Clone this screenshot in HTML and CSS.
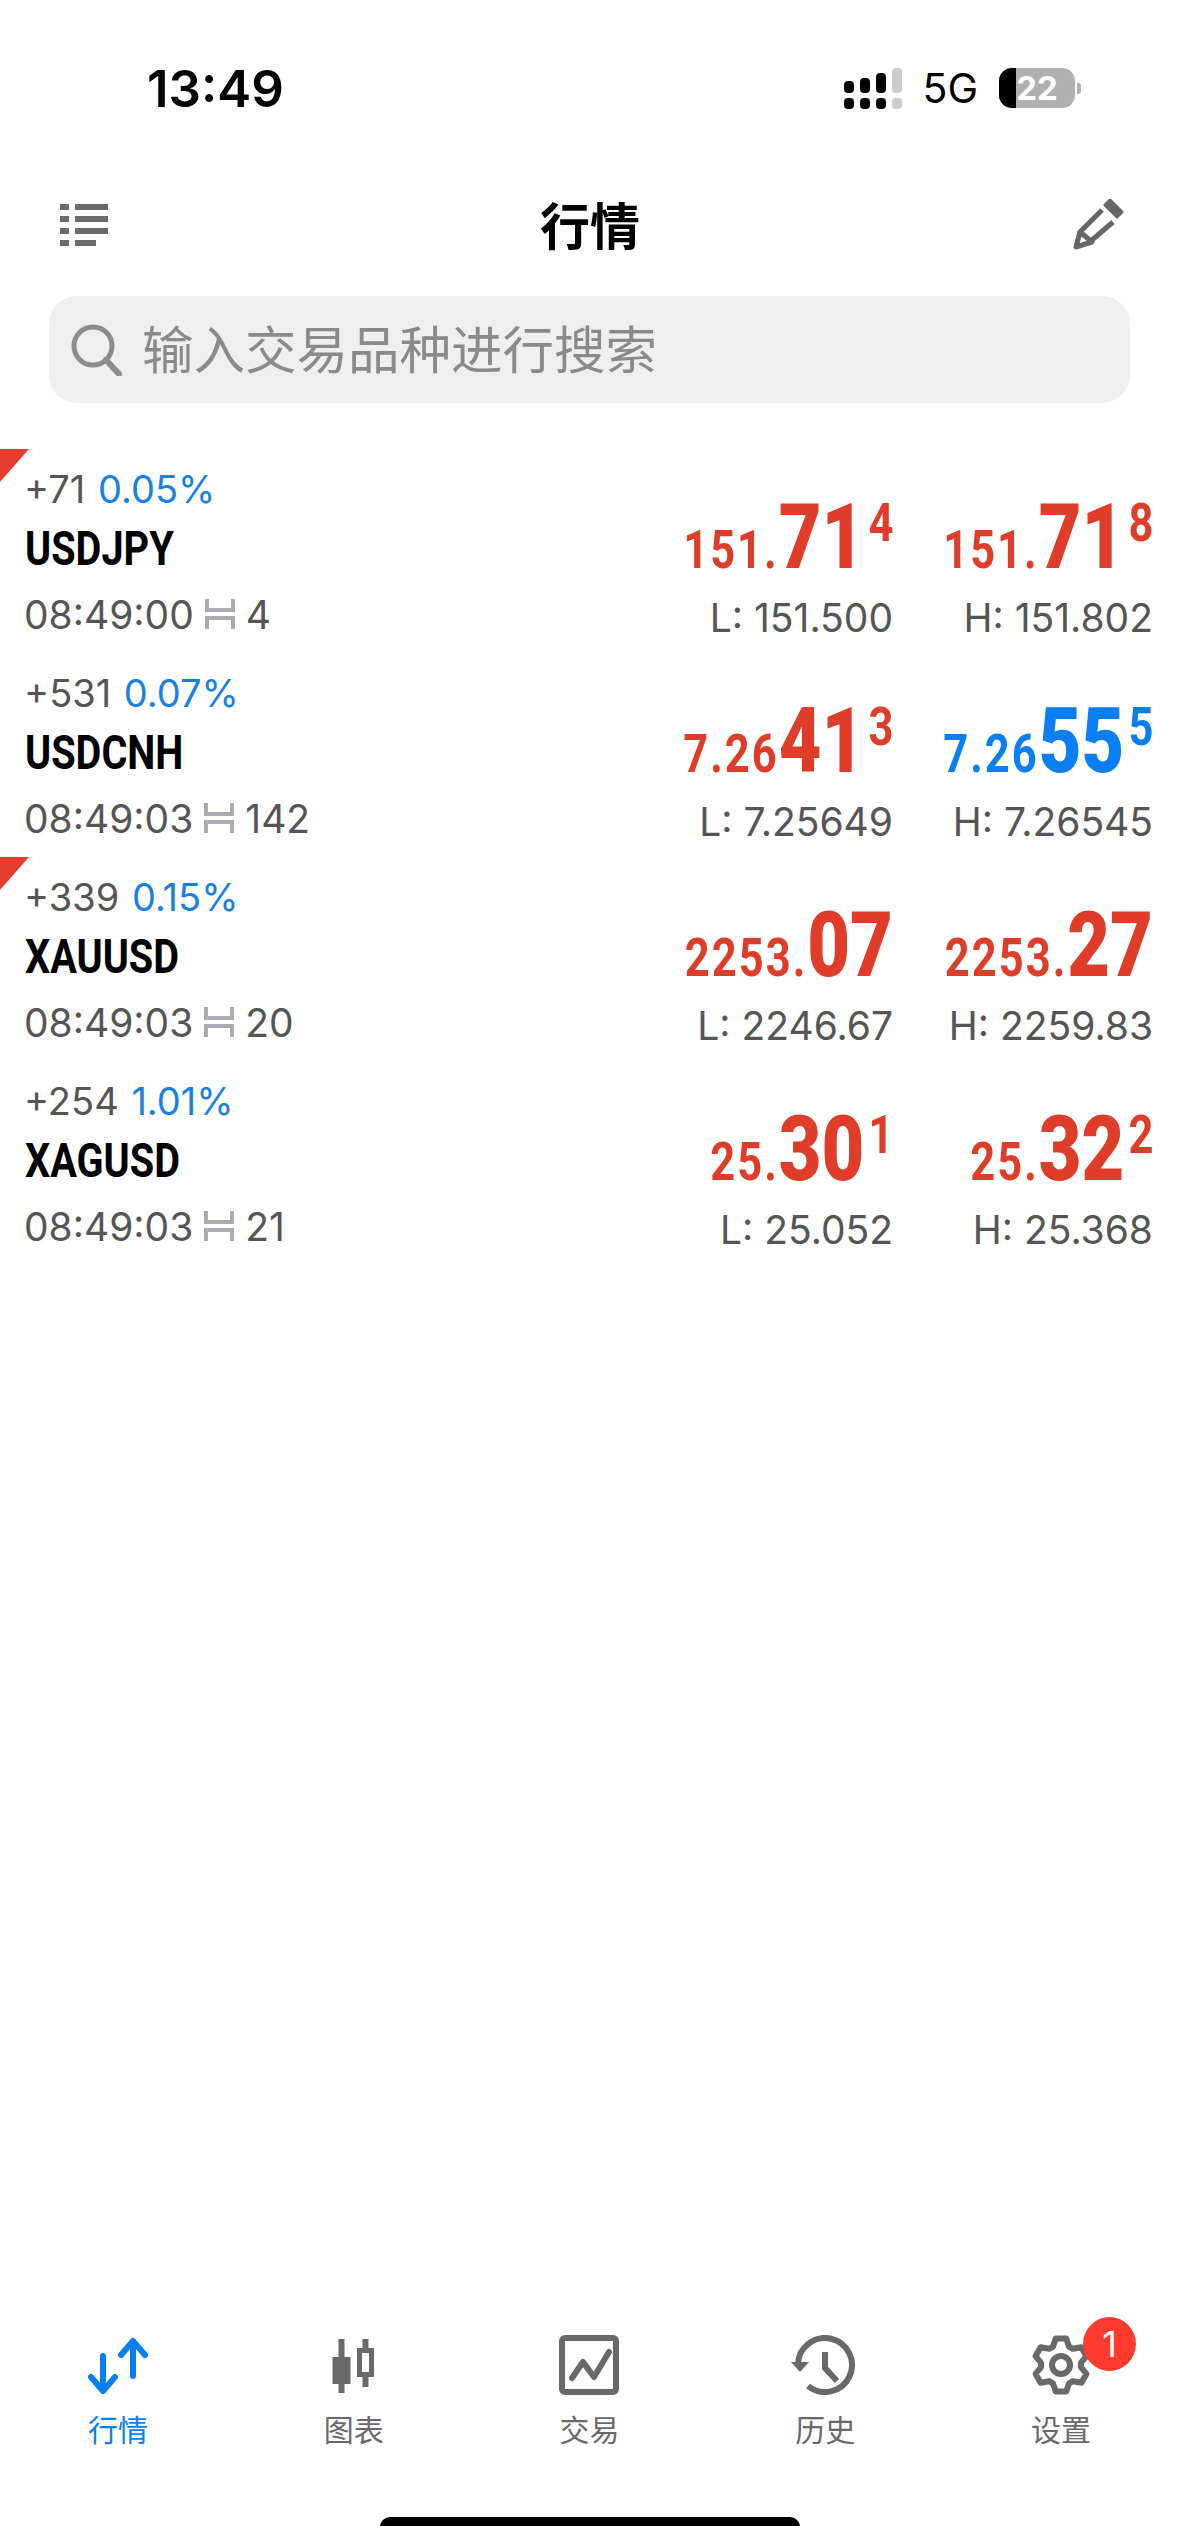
FILE: index.html
```html
<!DOCTYPE html>
<html lang="zh-CN">

<head>
  <meta charset="UTF-8">
  <meta name="viewport" content="width=device-width, initial-scale=1.0">
  <title>行情</title>
  <link rel="stylesheet" href="styles.css">
</head>

<body>
  <div class="phone">

    <!-- status bar -->
    <div class="status">
      <span class="clock">13:49</span>
      <div class="status-right">
        <svg class="signal" width="58" height="41" viewBox="0 0 58 41">
          <rect x="0" y="30" width="10" height="11" rx="4" />
          <rect x="16" y="30" width="10" height="11" rx="4" />
          <rect x="32" y="30" width="10" height="11" rx="4" />
          <rect x="48" y="30" width="10" height="11" rx="4" fill="#ccc" />
          <rect x="0" y="13" width="10" height="12" rx="4" />
          <rect x="16" y="10" width="10" height="15" rx="4" />
          <rect x="32" y="5" width="10" height="20" rx="4" />
          <rect x="48" y="0" width="10" height="25" rx="4" fill="#ccc" />
        </svg>
        <span class="network">5G</span>
        <div class="battery">
          <div class="battery-fill"></div>
          <span class="battery-num">22</span>
        </div>
        <div class="battery-nib"></div>
      </div>
    </div>

    <!-- top bar -->
    <div class="nav">
      <svg class="nav-list" width="48" height="42" viewBox="0 0 48 42" fill="#6b6b6b">
        <rect x="0" y="0" width="9" height="6" />
        <rect x="15" y="0" width="33" height="6" />
        <rect x="0" y="12" width="9" height="6" />
        <rect x="15" y="12" width="33" height="6" />
        <rect x="0" y="24" width="9" height="6" />
        <rect x="15" y="24" width="33" height="6" />
        <rect x="0" y="36" width="9" height="6" />
        <rect x="15" y="36" width="21" height="6" />
      </svg>
      <div class="nav-title">行情</div>
      <svg class="nav-edit" width="52" height="52" viewBox="0 0 52 52" fill="none" stroke="#666" stroke-width="5">
        <path d="M7 34 L30 11 M20 41 L41 23" />
        <path d="M4 48 L8 33 L20 43 Z" stroke-linejoin="round" />
        <path d="M33 6 L38 1 L50 13 L45 18 Z" fill="#666" stroke-width="3" stroke-linejoin="round" />
      </svg>
    </div>

    <!-- search box -->
    <div class="search">
      <svg width="52" height="52" viewBox="0 0 52 52" fill="none" stroke="#8c8c8c" stroke-width="5">
        <circle cx="22" cy="22" r="19" />
        <path d="M35 36 L48 50" stroke-linecap="round" stroke-width="6" />
      </svg>
      <span class="search-text">输入交易品种进行搜索</span>
    </div>

    <!-- quotes -->
    <div class="list">

      <div class="row">
        <div class="flag"></div>
        <div class="info">
          <div class="change">+71 <span class="pct">0.05%</span></div>
          <div class="symbol"><span>USDJPY</span></div>
          <div class="time">08:49:00
            <svg class="spread" width="30" height="30" viewBox="0 0 30 30">
              <path d="M2 0 V11 H28 V0 M2 30 V19 H28 V30" />
            </svg>4
          </div>
        </div>
        <div class="quote">
          <div class="price red"><span>151.<b>71</b><sup>4</sup></span></div>
          <div class="limit">L: 151.500</div>
        </div>
        <div class="quote">
          <div class="price red"><span>151.<b>71</b><sup>8</sup></span></div>
          <div class="limit">H: 151.802</div>
        </div>
      </div>

      <div class="row">
        <div class="info">
          <div class="change">+531 <span class="pct">0.07%</span></div>
          <div class="symbol"><span>USDCNH</span></div>
          <div class="time">08:49:03
            <svg class="spread" width="30" height="30" viewBox="0 0 30 30">
              <path d="M2 0 V11 H28 V0 M2 30 V19 H28 V30" />
            </svg>142
          </div>
        </div>
        <div class="quote">
          <div class="price red"><span>7.26<b>41</b><sup>3</sup></span></div>
          <div class="limit">L: 7.25649</div>
        </div>
        <div class="quote">
          <div class="price blue"><span>7.26<b>55</b><sup>5</sup></span></div>
          <div class="limit">H: 7.26545</div>
        </div>
      </div>

      <div class="row">
        <div class="flag"></div>
        <div class="info">
          <div class="change">+339 <span class="pct">0.15%</span></div>
          <div class="symbol"><span>XAUUSD</span></div>
          <div class="time">08:49:03
            <svg class="spread" width="30" height="30" viewBox="0 0 30 30">
              <path d="M2 0 V11 H28 V0 M2 30 V19 H28 V30" />
            </svg>20
          </div>
        </div>
        <div class="quote">
          <div class="price red"><span>2253.<b>07</b></span></div>
          <div class="limit">L: 2246.67</div>
        </div>
        <div class="quote">
          <div class="price red"><span>2253.<b>27</b></span></div>
          <div class="limit">H: 2259.83</div>
        </div>
      </div>

      <div class="row">
        <div class="info">
          <div class="change">+254 <span class="pct">1.01%</span></div>
          <div class="symbol"><span>XAGUSD</span></div>
          <div class="time">08:49:03
            <svg class="spread" width="30" height="30" viewBox="0 0 30 30">
              <path d="M2 0 V11 H28 V0 M2 30 V19 H28 V30" />
            </svg>21
          </div>
        </div>
        <div class="quote">
          <div class="price red"><span>25.<b>30</b><sup>1</sup></span></div>
          <div class="limit">L: 25.052</div>
        </div>
        <div class="quote">
          <div class="price red"><span>25.<b>32</b><sup>2</sup></span></div>
          <div class="limit">H: 25.368</div>
        </div>
      </div>

    </div>

    <!-- bottom tabs -->
    <div class="tabs">
      <div class="tab active">
        <svg width="60" height="60" viewBox="0 0 60 60" fill="none" stroke="#0a7ff5" stroke-width="6" stroke-linecap="round" stroke-linejoin="round">
          <path d="M15 21 V55 M3 42 L15 56 L27 42" />
          <path d="M45 41 V7 M33 20 L45 6 L57 20" />
        </svg>
        <span>行情</span>
      </div>
      <div class="tab">
        <svg width="60" height="60" viewBox="0 0 60 60" fill="#696969">
          <rect x="14.5" y="4" width="6" height="54" />
          <rect x="8.5" y="22" width="18" height="27" />
          <rect x="38.5" y="4" width="6" height="48" />
          <rect x="35.5" y="15.5" width="12" height="24" fill="#fff" stroke="#696969" stroke-width="5" />
        </svg>
        <span>图表</span>
      </div>
      <div class="tab">
        <svg width="60" height="60" viewBox="0 0 60 60" fill="none" stroke="#696969" stroke-width="6" stroke-linejoin="round" stroke-linecap="round">
          <rect x="3" y="3" width="54" height="54" rx="3" />
          <path d="M13 43 L24 27 L35 42 L50 17" />
        </svg>
        <span>交易</span>
      </div>
      <div class="tab">
        <svg width="70" height="60" viewBox="-5 0 70 60" fill="none" stroke="#696969" stroke-width="6">
          <path d="M3 30 A27 27 0 1 1 13 51" />
          <path d="M-4 27 H14 L5 37 Z" fill="#696969" stroke="none" />
          <path d="M30 17 V33 L42 46" />
        </svg>
        <span>历史</span>
      </div>
      <div class="tab">
        <div class="gear">
          <svg width="60" height="60" viewBox="-30 -30 60 60" fill="none" stroke="#696969" stroke-width="6" stroke-linejoin="round">
            <path d="M-5.2 -26.5 L5.2 -26.5 L8.1 -18.3 L11.8 -16.2 L20.4 -17.7 L25.5 -8.8 L19.9 -2.1 L19.9 2.1 L25.5 8.8 L20.4 17.7 L11.8 16.2 L8.1 18.3 L5.2 26.5 L-5.2 26.5 L-8.1 18.3 L-11.8 16.2 L-20.4 17.7 L-25.5 8.8 L-19.9 2.1 L-19.9 -2.1 L-25.5 -8.8 L-20.4 -17.7 L-11.8 -16.2 L-8.1 -18.3 Z" />
            <circle cx="0" cy="0" r="9" />
          </svg>
          <div class="badge">1</div>
        </div>
        <span>设置</span>
      </div>
    </div>

    <div class="home-bar"></div>
  </div>
</body>

</html>
```

FILE: styles.css
```css
* {
  box-sizing: border-box;
}

body {
  margin: 0;
  background: #fff;
  font-family: Inter, "Noto Sans CJK SC", sans-serif;
  color: #555;
}

.phone {
  display: flex;
  flex-direction: column;
  height: 2526px;
  overflow: hidden;
}

/* status bar */
.status {
  display: flex;
  justify-content: space-between;
  align-items: center;
  height: 76px;
  margin-top: 50px;
  padding: 0 98px 0 147px;
}

.clock {
  font-size: 51px;
  font-weight: 600;
  color: #000;
}

.status-right {
  display: flex;
  align-items: center;
}

.network {
  margin-left: 20px;
  font-size: 41px;
  color: #000;
}

.battery {
  position: relative;
  width: 76px;
  height: 40px;
  margin-left: 21px;
  border-radius: 13px;
  background: #b0b0b0;
  overflow: hidden;
  text-align: center;
}

.battery-fill {
  width: 17px;
  height: 100%;
  background: #000;
}

.battery-num {
  position: absolute;
  top: 0;
  left: 0;
  width: 100%;
  font-size: 33px;
  line-height: 40px;
  font-weight: 700;
  color: #fff;
}

.battery-nib {
  width: 4px;
  height: 11px;
  margin-left: 2px;
  border-radius: 0 3px 3px 0;
  background: #b0b0b0;
}

/* top bar */
.nav {
  display: flex;
  justify-content: space-between;
  align-items: center;
  height: 72px;
  margin-top: 64px;
  padding: 0 55px 0 60px;
}

.nav-title {
  margin-top: -6px;
  font-size: 50px;
  font-weight: 700;
  color: #000;
}

.nav-list {
  margin-top: -2px;
}

.nav-edit {
  margin-top: -2px;
}

/* search */
.search {
  display: flex;
  align-items: center;
  height: 107px;
  margin: 34px 49px 0;
  padding-left: 22px;
  border-radius: 28px;
  background: #efefef;
}

.search-text {
  height: 107px;
  margin-left: 19px;
  font-size: 51.5px;
  line-height: 108px;
  color: #8a8a8a;
}

/* quote rows */
.list {
  margin-top: 46px;
}

.row {
  position: relative;
  display: flex;
  height: 204px;
  padding: 12px 26px 0;
}

.flag {
  position: absolute;
  top: 0;
  left: 0;
  width: 29px;
  height: 33px;
  background: #e63d2e;
  clip-path: polygon(0 0, 100% 0, 0 100%);
}

.info {
  flex: 1;
  margin-left: -2px;
}

.change {
  height: 54px;
  font-size: 38px;
  line-height: 56px;
}

.pct {
  margin-left: 2px;
  color: #1a7fe0;
}

/* no narrow face is installed, so the tickers and prices are squeezed */
.symbol {
  height: 68px;
  font-family: Roboto, sans-serif;
  font-size: 49px;
  font-weight: 700;
  line-height: 68px;
  color: #000;
}

.symbol span {
  display: inline-block;
  margin-left: 1px;
  transform: scaleX(0.81);
  transform-origin: left center;
}

.time {
  display: flex;
  align-items: center;
  gap: 11px;
  height: 60px;
  padding-top: 2px;
  font-size: 39px;
}

.spread {
  fill: none;
  stroke: #a9abb0;
  stroke-width: 4;
}

.quote {
  width: 260px;
  text-align: right;
}

.price {
  height: 127px;
  font-family: Roboto, sans-serif;
  font-size: 53px;
  font-weight: 700;
  line-height: 154px;
  letter-spacing: 2.5px;
  white-space: nowrap;
}

.price span {
  display: inline-block;
  transform: scaleX(0.82);
  transform-origin: right center;
}

.price b {
  font-size: 90px;
  letter-spacing: 0;
}

.price sup {
  margin-left: 5px;
  font-size: 53px;
  line-height: 0;
  letter-spacing: 0;
  vertical-align: 27px;
}

.red {
  color: #e03c2a;
}

.blue {
  color: #0a7ff5;
}

.limit {
  font-size: 39px;
  line-height: 60px;
}

/* bottom tabs */
.tabs {
  display: grid;
  grid-template-columns: repeat(5, 1fr);
  margin-top: auto;
}

.tab {
  display: flex;
  flex-direction: column;
  align-items: center;
  font-size: 30px;
  color: #696969;
}

.tab span {
  margin-top: 13px;
  line-height: 44px;
}

.tab.active {
  color: #0a7ff5;
}

.gear {
  position: relative;
  height: 60px;
}

.badge {
  position: absolute;
  top: -18px;
  left: 52px;
  width: 53px;
  height: 54px;
  border-radius: 50%;
  background: #ff3b30;
  color: #fff;
  font-size: 36px;
  line-height: 54px;
  text-align: center;
}

.home-bar {
  width: 420px;
  height: 20px;
  margin: 65px auto -11px;
  border-radius: 10px;
  background: #000;
}
```
